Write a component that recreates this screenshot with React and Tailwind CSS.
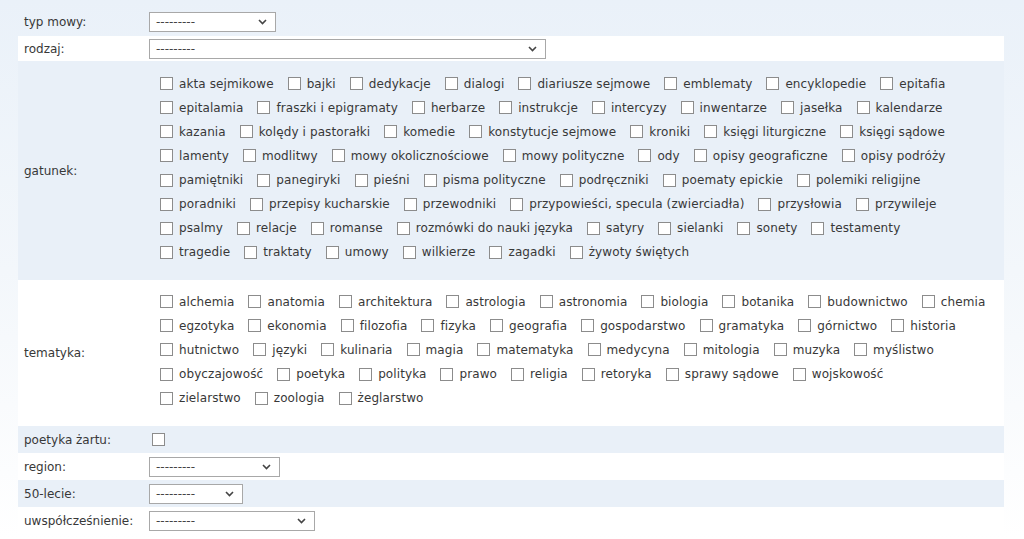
import React from "react";

const gatunek = [
  ["akta sejmikowe", "bajki", "dedykacje", "dialogi", "diariusze sejmowe", "emblematy", "encyklopedie", "epitafia"],
  ["epitalamia", "fraszki i epigramaty", "herbarze", "instrukcje", "intercyzy", "inwentarze", "jasełka", "kalendarze"],
  ["kazania", "kolędy i pastorałki", "komedie", "konstytucje sejmowe", "kroniki", "księgi liturgiczne", "księgi sądowe"],
  ["lamenty", "modlitwy", "mowy okolicznościowe", "mowy polityczne", "ody", "opisy geograficzne", "opisy podróży"],
  ["pamiętniki", "panegiryki", "pieśni", "pisma polityczne", "podręczniki", "poematy epickie", "polemiki religijne"],
  ["poradniki", "przepisy kucharskie", "przewodniki", "przypowieści, specula (zwierciadła)", "przysłowia", "przywileje"],
  ["psalmy", "relacje", "romanse", "rozmówki do nauki języka", "satyry", "sielanki", "sonety", "testamenty"],
  ["tragedie", "traktaty", "umowy", "wilkierze", "zagadki", "żywoty świętych"],
];

const tematyka = [
  ["alchemia", "anatomia", "architektura", "astrologia", "astronomia", "biologia", "botanika", "budownictwo", "chemia"],
  ["egzotyka", "ekonomia", "filozofia", "fizyka", "geografia", "gospodarstwo", "gramatyka", "górnictwo", "historia"],
  ["hutnictwo", "języki", "kulinaria", "magia", "matematyka", "medycyna", "mitologia", "muzyka", "myślistwo"],
  ["obyczajowość", "poetyka", "polityka", "prawo", "religia", "retoryka", "sprawy sądowe", "wojskowość"],
  ["zielarstwo", "zoologia", "żeglarstwo"],
];

function Box() {
  return <span className="inline-block w-[13px] h-[13px] border border-[#8c8c8c] bg-white shrink-0" />;
}

function Select({ width }) {
  return (
    <div className={`flex items-center justify-between h-[20px] border border-[#a8a8a8] bg-white pl-[6px] pr-[8px] ${width}`}>
      <span className="text-[12px] leading-none text-[#444]">---------</span>
      <svg width="9" height="6" viewBox="0 0 9 6">
        <polyline points="1,1 4.5,4.5 8,1" fill="none" stroke="#444" strokeWidth="1.6" />
      </svg>
    </div>
  );
}

function Checks({ rows }) {
  return (
    <div className="pl-[11px] tracking-[0.1px]">
      {rows.map((row, i) => (
        <div key={i} className="flex items-center h-[24.15px] whitespace-nowrap">
          {row.map((t) => (
            <span key={t} className="flex items-center mr-[14px]">
              <Box />
              <span className="ml-[6px]">{t}</span>
            </span>
          ))}
        </div>
      ))}
    </div>
  );
}

function Row({ label, bg, h, children }) {
  return (
    <div className={`flex items-center ${bg} ${h}`}>
      <div className="w-[131px] pl-[6px] shrink-0">{label}</div>
      <div className="flex-1">{children}</div>
    </div>
  );
}

export default function App() {
  return (
    <div
      className="w-[1024px] h-[539px] overflow-hidden pt-[8px] text-[12px] text-[#383838] bg-gradient-to-b from-[#eaf1f9] via-[#f3f7fb] to-white"
      style={{ fontFamily: '"DejaVu Sans", Verdana, sans-serif' }}
    >
      <div className="ml-[18px] w-[986px]">
        <Row label="typ mowy:" bg="" h="h-[28px]">
          <Select width="w-[127px]" />
        </Row>
        <Row label="rodzaj:" bg="bg-white" h="h-[25px]">
          <Select width="w-[397px]" />
        </Row>
        <Row label="gatunek:" bg="bg-[#e9f0f8]" h="h-[219px]">
          <div className="pb-[5px]">
            <Checks rows={gatunek} />
          </div>
        </Row>
        <Row label="tematyka:" bg="bg-white" h="h-[146px]">
          <div className="pb-[6px]">
            <Checks rows={tematyka} />
          </div>
        </Row>
        <Row label="poetyka żartu:" bg="bg-[#e9f0f8]" h="h-[27px]">
          <div className="pl-[3px] flex">
            <Box />
          </div>
        </Row>
        <Row label="region:" bg="bg-white" h="h-[27px]">
          <Select width="w-[131px]" />
        </Row>
        <Row label="50-lecie:" bg="bg-[#e9f0f8]" h="h-[27px]">
          <Select width="w-[94px]" />
        </Row>
        <Row label="uwspółcześnienie:" bg="bg-white" h="h-[27px]">
          <Select width="w-[166px]" />
        </Row>
      </div>
    </div>
  );
}
